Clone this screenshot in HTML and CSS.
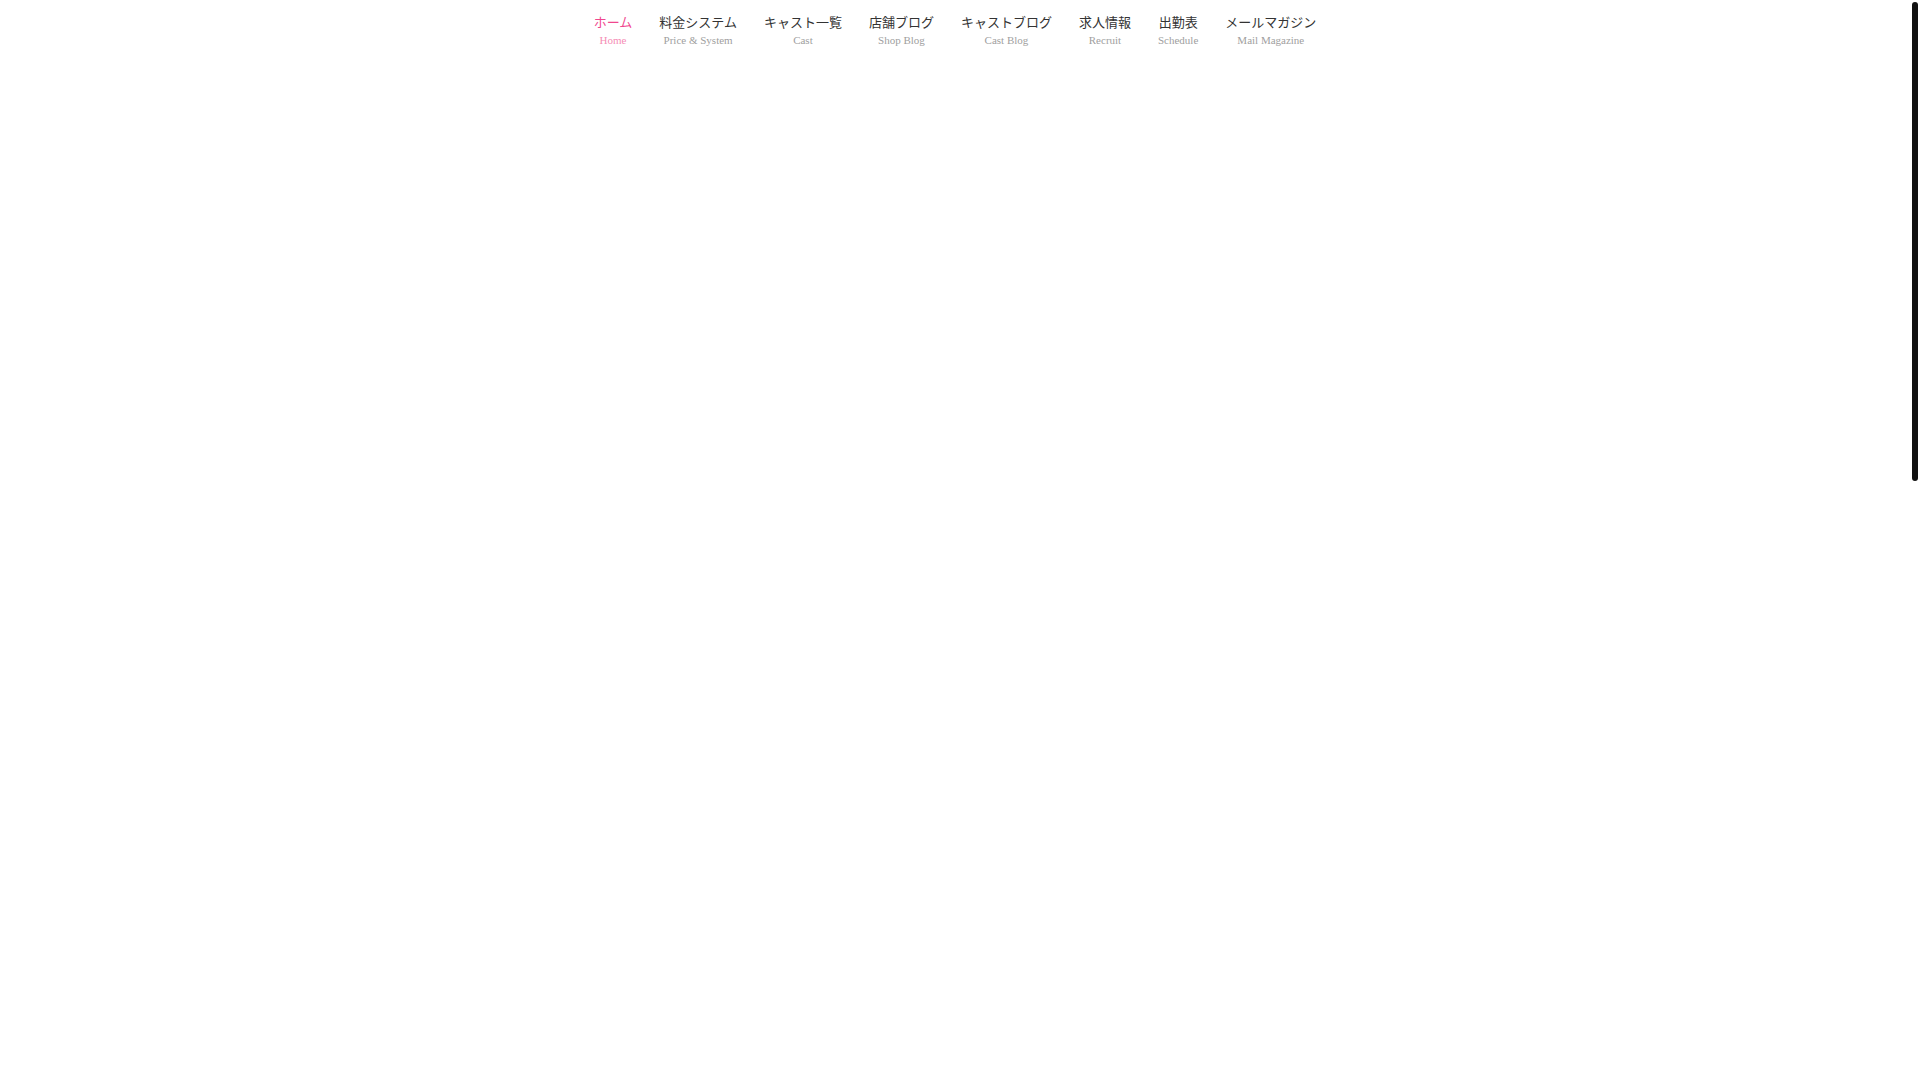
FILE: index.html
```html
<!DOCTYPE html>
<html lang="ja">
<head>
<meta charset="utf-8">
<title>Home</title>
<link rel="stylesheet" href="styles.css">
</head>
<body>
<header class="site-header">
  <nav class="global-nav">
    <ul class="nav-list">
      <li class="nav-item is-current"><a href="#"><span class="nav-ja">ホーム</span><span class="nav-en">Home</span></a></li>
      <li class="nav-item"><a href="#"><span class="nav-ja">料金システム</span><span class="nav-en">Price &amp; System</span></a></li>
      <li class="nav-item"><a href="#"><span class="nav-ja">キャスト一覧</span><span class="nav-en">Cast</span></a></li>
      <li class="nav-item"><a href="#"><span class="nav-ja">店舗ブログ</span><span class="nav-en">Shop Blog</span></a></li>
      <li class="nav-item"><a href="#"><span class="nav-ja">キャストブログ</span><span class="nav-en">Cast Blog</span></a></li>
      <li class="nav-item"><a href="#"><span class="nav-ja">求人情報</span><span class="nav-en">Recruit</span></a></li>
      <li class="nav-item"><a href="#"><span class="nav-ja">出勤表</span><span class="nav-en">Schedule</span></a></li>
      <li class="nav-item"><a href="#"><span class="nav-ja">メールマガジン</span><span class="nav-en">Mail Magazine</span></a></li>
    </ul>
  </nav>
</header>
<main class="page-body"></main>
<div class="scrollbar" aria-hidden="true"><div class="scrollbar-thumb"></div></div>
</body>
</html>
```

FILE: styles.css
```css
html {
  background: #fff;
}
body {
  margin: 0;
  padding-right: 10px;
  background: #fff;
  font-family: "Noto Sans CJK JP", "Noto Sans", sans-serif;
  color: #333;
}
.site-header {
  padding-top: 13px;
}
.nav-list {
  list-style: none;
  margin: 0;
  padding: 0;
  display: flex;
  justify-content: center;
  gap: 27px;
}
.nav-item a {
  display: flex;
  flex-direction: column;
  align-items: center;
  text-decoration: none;
}
.nav-ja {
  font-size: 13px;
  line-height: 18px;
  font-weight: 400;
  color: #333;
  white-space: nowrap;
}
.nav-en {
  margin-top: 2px;
  font-family: "Liberation Serif", serif;
  font-size: 11px;
  line-height: 14px;
  color: #a0a0a0;
  white-space: nowrap;
}
.is-current .nav-ja {
  color: #f0468e;
}
.is-current .nav-en {
  color: #f58db5;
}
.scrollbar {
  position: fixed;
  top: 0;
  right: 0;
  width: 10px;
  height: 100vh;
  background: #fff;
}
.scrollbar-thumb {
  position: absolute;
  top: 2px;
  left: 2px;
  width: 6px;
  height: 479px;
  border-radius: 3px;
  background: #111;
}
```
